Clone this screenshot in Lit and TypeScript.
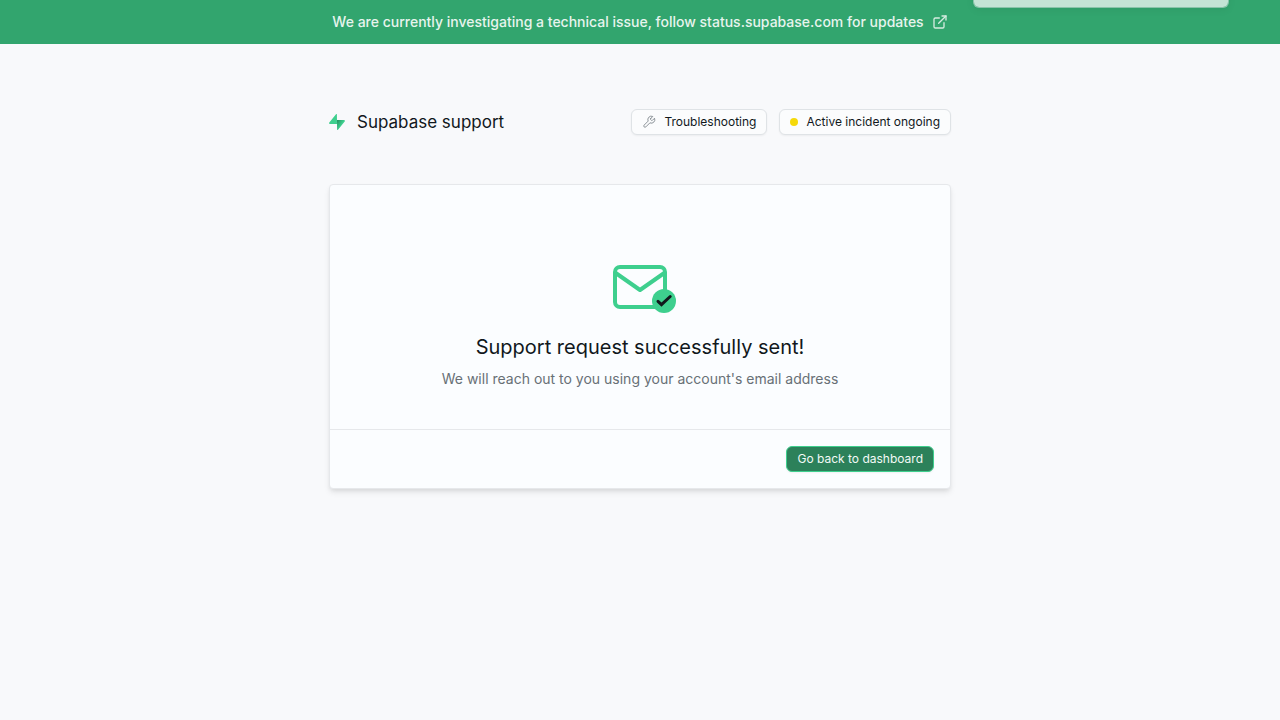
import { LitElement, html, css } from "lit";
import { customElement, property } from "lit/decorators.js";

@customElement("incident-banner")
class IncidentBanner extends LitElement {
  static styles = css`
    :host {
      display: block;
      background: #32a56e;
    }
    .link {
      display: flex;
      align-items: center;
      justify-content: center;
      gap: 8px;
      padding: 12px 16px;
      font-size: 14px;
      line-height: 20px;
      font-weight: 500;
      color: #e7f4ed;
      text-decoration: none;
    }
    .icon {
      flex: none;
      opacity: 0.9;
    }
  `;

  render() {
    return html`
      <a class="link" href="#status">
        <span>We are currently investigating a technical issue, follow status.supabase.com for updates</span>
        <svg class="icon" width="16" height="16" viewBox="0 0 24 24" fill="none" stroke="currentColor" stroke-width="2" stroke-linecap="round" stroke-linejoin="round" aria-hidden="true">
          <path d="M15 3h6v6" />
          <path d="M10 14 21 3" />
          <path d="M18 13v6a2 2 0 0 1-2 2H5a2 2 0 0 1-2-2V8a2 2 0 0 1 2-2h6" />
        </svg>
      </a>
    `;
  }
}

@customElement("ui-button")
class UiButton extends LitElement {
  @property() variant = "default";

  static styles = css`
    :host {
      display: block;
    }
    .button {
      display: flex;
      align-items: center;
      gap: 8px;
      box-sizing: border-box;
      margin: 0;
      padding: 4px 10px;
      border: 1px solid #dfe3e6;
      border-radius: 6px;
      background: #fbfcfd;
      color: #11181c;
      box-shadow: 0 1px 2px rgba(0, 0, 0, 0.05);
      font-family: inherit;
      font-size: 12px;
      line-height: 16px;
      white-space: nowrap;
      cursor: pointer;
    }
    .primary {
      border-color: #3ecf8e;
      background: #2c815a;
      color: #f3faf6;
    }
  `;

  render() {
    return html`
      <button type="button" class="button ${this.variant}">
        <slot name="icon"></slot>
        <slot></slot>
      </button>
    `;
  }
}

@customElement("app-root")
class AppRoot extends LitElement {
  static styles = css`
    :host {
      display: block;
      position: relative;
      overflow: hidden;
      min-height: 100vh;
      background: #f8f9fb;
      color: #11181c;
      font-family: Inter, "Liberation Sans", sans-serif;
    }
    .toast {
      position: absolute;
      top: -56px;
      right: 51px;
      box-sizing: border-box;
      width: 256px;
      height: 64px;
      border: 1px solid rgba(223, 227, 230, 0.5);
      border-radius: 6px;
      background: rgba(251, 252, 253, 0.72);
      background-clip: padding-box;
      box-shadow: 0 2px 8px rgba(0, 0, 0, 0.06);
    }
    .page {
      box-sizing: border-box;
      max-width: 654px;
      margin: 0 auto;
      padding: 64px 16px;
    }
    .header {
      display: flex;
      align-items: center;
      justify-content: space-between;
      flex-wrap: wrap;
      gap: 12px;
      margin-bottom: 48px;
    }
    .brand {
      display: flex;
      align-items: center;
      gap: 12px;
    }
    .title {
      margin: 0;
      font-size: 17px;
      line-height: 28px;
      font-weight: 400;
    }
    .actions {
      display: flex;
      gap: 12px;
    }
    .wrench {
      color: #7e868c;
    }
    .dot {
      width: 8px;
      height: 8px;
      border-radius: 50%;
      background: #f5d90a;
    }
    .card {
      border: 1px solid #e6e8eb;
      border-radius: 4px;
      background: #fbfdff;
      box-shadow: 0 4px 6px -1px rgba(0, 0, 0, 0.1), 0 2px 4px -1px rgba(0, 0, 0, 0.06);
    }
    .message {
      display: flex;
      flex-direction: column;
      align-items: center;
      padding: 78px 16px 40px;
      text-align: center;
    }
    .mail {
      position: relative;
      display: flex;
    }
    .check {
      position: absolute;
      right: -9px;
      bottom: -3px;
    }
    .heading {
      margin: 22px 0 8px;
      font-size: 20px;
      line-height: 28px;
      font-weight: 400;
    }
    .detail {
      margin: 0;
      font-size: 14px;
      line-height: 20px;
      color: #687076;
    }
    .footer {
      display: flex;
      justify-content: flex-end;
      padding: 16px;
      border-top: 1px solid #e6e8eb;
    }
  `;

  render() {
    return html`
      <incident-banner></incident-banner>
      <div class="toast" role="status"></div>
      <main class="page">
        <header class="header">
          <div class="brand">
            <svg width="16" height="16" viewBox="0 0 16 16" aria-hidden="true">
              <defs>
                <linearGradient id="bolt" x1="8" y1="7" x2="13" y2="10" gradientUnits="userSpaceOnUse">
                  <stop stop-color="#249361" />
                  <stop offset="1" stop-color="#3ecf8e" />
                </linearGradient>
              </defs>
              <path d="M8.1 15.5c0 .5.6.7.9.3l6.7-8.2c.5-.7 0-1.7-.8-1.7H8z" fill="url(#bolt)" />
              <path d="M7.9.5c0-.5-.6-.7-.9-.3L.3 8.4c-.5.7 0 1.7.8 1.7H8z" fill="#3ecf8e" />
            </svg>
            <h1 class="title">Supabase support</h1>
          </div>
          <div class="actions">
            <ui-button>
              <svg slot="icon" class="wrench" width="14" height="14" viewBox="0 0 24 24" fill="none" stroke="currentColor" stroke-width="1.5" stroke-linecap="round" stroke-linejoin="round" aria-hidden="true">
                <path d="M14.7 6.3a1 1 0 0 0 0 1.4l1.6 1.6a1 1 0 0 0 1.4 0l3.77-3.77a6 6 0 0 1-7.94 7.94l-6.91 6.91a2.12 2.12 0 0 1-3-3l6.91-6.91a6 6 0 0 1 7.94-7.94l-3.76 3.76z" />
              </svg>
              Troubleshooting
            </ui-button>
            <ui-button>
              <span slot="icon" class="dot"></span>
              Active incident ongoing
            </ui-button>
          </div>
        </header>
        <section class="card">
          <div class="message">
            <div class="mail">
              <svg width="56" height="48" viewBox="0 0 56 48" fill="none" stroke="#3ecf8e" stroke-width="4" stroke-linejoin="round" aria-hidden="true">
                <rect x="3" y="4" width="50" height="40" rx="5" />
                <path d="M3 9.5 28 27 53 9.5" />
              </svg>
              <svg class="check" width="26" height="26" viewBox="0 0 26 26" fill="none" aria-hidden="true">
                <circle cx="13" cy="13" r="12" fill="#3ecf8e" />
                <path d="m7 13.3 3.5 3.4 8.7-8.2" stroke="#11181c" stroke-width="3" stroke-linecap="round" />
              </svg>
            </div>
            <h2 class="heading">Support request successfully sent!</h2>
            <p class="detail">We will reach out to you using your account's email address</p>
          </div>
          <div class="footer">
            <ui-button variant="primary">Go back to dashboard</ui-button>
          </div>
        </section>
      </main>
    `;
  }
}
